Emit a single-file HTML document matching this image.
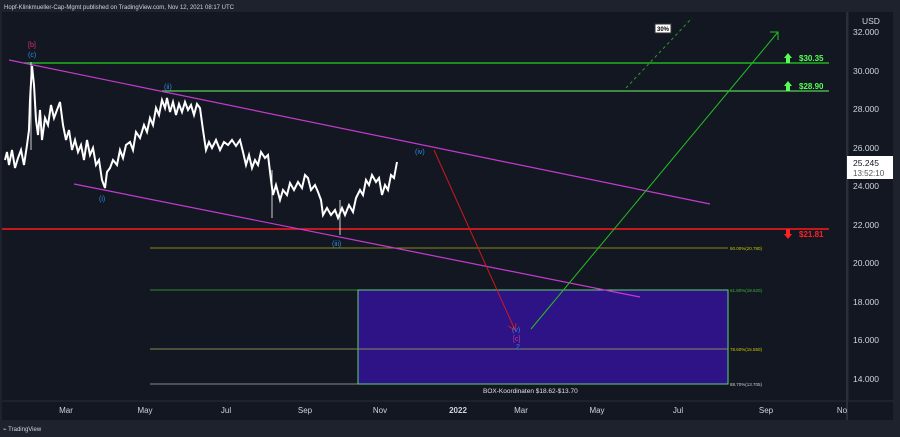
<!DOCTYPE html>
<html><head><meta charset="utf-8"><style>
html,body{margin:0;padding:0;background:#1e222d;}
body{width:900px;height:437px;position:relative;overflow:hidden;font-family:"Liberation Sans",sans-serif;}
</style></head><body>
<svg width="900" height="437" xmlns="http://www.w3.org/2000/svg" style="position:absolute;left:0;top:0">
<rect width="900" height="437" fill="#1e222d"/>
<rect x="2" y="12" width="845" height="388" fill="#131722"/>
<rect x="849" y="12" width="44" height="388" fill="#131722"/>
<rect x="2" y="402" width="891" height="18" fill="#131722"/>
<line x1="847" y1="12" x2="847" y2="420" stroke="#2a2e39" stroke-width="2"/>
<text x="4" y="9" fill="#d1d4dc" font-size="6">Hopf-Klinkmueller-Cap-Mgmt published on TradingView.com, Nov 12, 2021 08:17 UTC</text>
<!-- fib lines -->
<line x1="150" y1="248" x2="728" y2="248" stroke="#8a8a1a" stroke-width="1"/>
<line x1="150" y1="290" x2="728" y2="290" stroke="#2e8b2e" stroke-width="1"/>
<line x1="150" y1="384" x2="728" y2="384" stroke="#888" stroke-width="1"/>
<rect x="358" y="290" width="370" height="94" fill="#2e1387" stroke="#5fd07a" stroke-width="1"/>
<line x1="150" y1="349" x2="728" y2="349" stroke="#8a8a5a" stroke-width="1"/>
<g font-size="4.5" fill="#c8c800"><text x="730" y="250">50.00%(20.780)</text><text x="730" y="292" fill="#3cb43c">61.80%(18.620)</text><text x="730" y="351">78.60%(15.550)</text><text x="730" y="386" fill="#ccc">88.70%(13.705)</text></g>
<text x="483" y="393" fill="#e0e0e0" font-size="6.5">BOX-Koordinaten $18.62-$13.70</text>
<!-- horizontals -->
<line x1="24" y1="63" x2="829" y2="63" stroke="#22b022" stroke-width="1.5"/>
<line x1="162" y1="91" x2="829" y2="91" stroke="#4caf50" stroke-width="1.5"/>
<line x1="2" y1="229" x2="829" y2="229" stroke="#ff1a1a" stroke-width="1.5"/>
<!-- channel -->
<line x1="9" y1="60" x2="710" y2="204" stroke="#c53bcc" stroke-width="1.2"/>
<line x1="74" y1="184" x2="640" y2="297" stroke="#c53bcc" stroke-width="1.2"/>
<!-- arrows -->
<line x1="434" y1="150" x2="515" y2="330" stroke="#cc1a1a" stroke-width="1"/>
<polyline points="508,326 515,330 516,323" fill="none" stroke="#cc1a1a"/>
<line x1="531" y1="329" x2="778" y2="32" stroke="#22c022" stroke-width="1"/>
<polyline points="770,32 778,32 778,40" fill="none" stroke="#22c022"/>
<line x1="626" y1="88" x2="692" y2="18" stroke="#22a022" stroke-dasharray="3,3"/>
<rect x="655" y="24" width="16" height="9" fill="#fff" stroke="#333"/>
<text x="657" y="31" font-size="6" font-weight="bold" fill="#000">30%</text>
<!-- price -->
<polyline fill="none" stroke="#fff" stroke-width="2" stroke-linejoin="miter" points="5,160 7,152 9,165 12,150 15,168 18,158 21,150 24,165 27,145 29,130 30,100 32,66 34,85 36,120 38,135 40,110 42,140 45,118 48,125 51,105 54,118 57,110 60,102 63,125 66,140 69,130 72,150 75,140 78,152 81,145 84,160 87,140 90,155 93,148 96,165 99,160 102,180 105,188 107,172 110,168 113,160 117,165 120,150 123,158 126,145 130,142 133,150 136,132 140,138 144,125 147,132 150,118 153,125 156,108 159,115 162,100 165,108 167,98 170,112 173,102 176,115 179,104 182,112 185,102 188,110 191,105 194,115 197,104 200,108 203,130 206,150 209,142 212,148 216,140 220,150 224,142 228,145 232,140 236,146 240,140 243,152 246,165 249,155 252,168 255,160 258,165 261,152 265,158 268,155 271,180 273,195 276,185 280,200 283,190 287,195 290,183 294,190 298,182 302,188 305,175 308,178 311,190 315,185 318,192 321,200 323,215 327,208 331,215 335,210 338,218 342,208 345,215 349,205 353,212 356,198 360,190 363,195 366,180 369,185 372,175 376,182 379,178 382,195 385,185 388,190 391,175 394,178 397,162"/>
<g stroke="#fff" stroke-width="0.8"><line x1="31" y1="62" x2="31" y2="150"/><line x1="272" y1="170" x2="272" y2="218"/><line x1="340" y1="200" x2="340" y2="235"/></g>
<!-- labels -->
<g font-size="7" fill="#2e8de0"><text x="28" y="47" fill="#e0306a">[b]</text><text x="28" y="57">(c)</text><text x="164" y="89">(ii)</text><text x="99" y="201">(i)</text><text x="332" y="246">(iii)</text><text x="415" y="154">(iv)</text><text x="512" y="332">(v)</text><text x="513" y="341" fill="#c03a9a">[c]</text><text x="516" y="349">2</text></g>
<!-- right labels -->
<g font-size="8" font-weight="bold"><text x="799" y="61" fill="#5f5">$30.35</text><text x="799" y="89" fill="#5f5">$28.90</text><text x="799" y="237" fill="#f22">$21.81</text></g>
<path d="M786,63 v-5 h-2 l4,-5 l4,5 h-2 v5z" fill="#5f5"/><path d="M786,91 v-5 h-2 l4,-5 l4,5 h-2 v5z" fill="#5f5"/>
<path d="M786,229 v5 h-2 l4,5 l4,-5 h-2 v-5z" fill="#f22"/>
<!-- axis -->
<g font-size="8.5" fill="#d1d4dc"><text x="862" y="24">USD</text><text x="853" y="35">32.000</text><text x="853" y="74">30.000</text><text x="853" y="112">28.000</text><text x="853" y="151">26.000</text><text x="853" y="189">24.000</text><text x="853" y="228">22.000</text><text x="853" y="266">20.000</text><text x="853" y="305">18.000</text><text x="853" y="343">16.000</text><text x="853" y="382">14.000</text></g>
<rect x="847" y="156" width="46" height="23" fill="#fff"/>
<text x="853" y="166" font-size="8.5" fill="#131722">25.245</text><text x="853" y="176" font-size="8" fill="#555">13:52:10</text>
<g font-size="8" fill="#d1d4dc" text-anchor="middle"><text x="66" y="413">Mar</text><text x="145" y="413">May</text><text x="226" y="413">Jul</text><text x="305" y="413">Sep</text><text x="380" y="413">Nov</text><text x="458" y="413" font-weight="bold">2022</text><text x="521" y="413">Mar</text><text x="597" y="413">May</text><text x="678" y="413">Jul</text><text x="766" y="413">Sep</text><text x="842" y="413">No</text></g>
<text x="3" y="431" font-size="6" fill="#d1d4dc">⌁ TradingView</text>
</svg>
</body></html>
